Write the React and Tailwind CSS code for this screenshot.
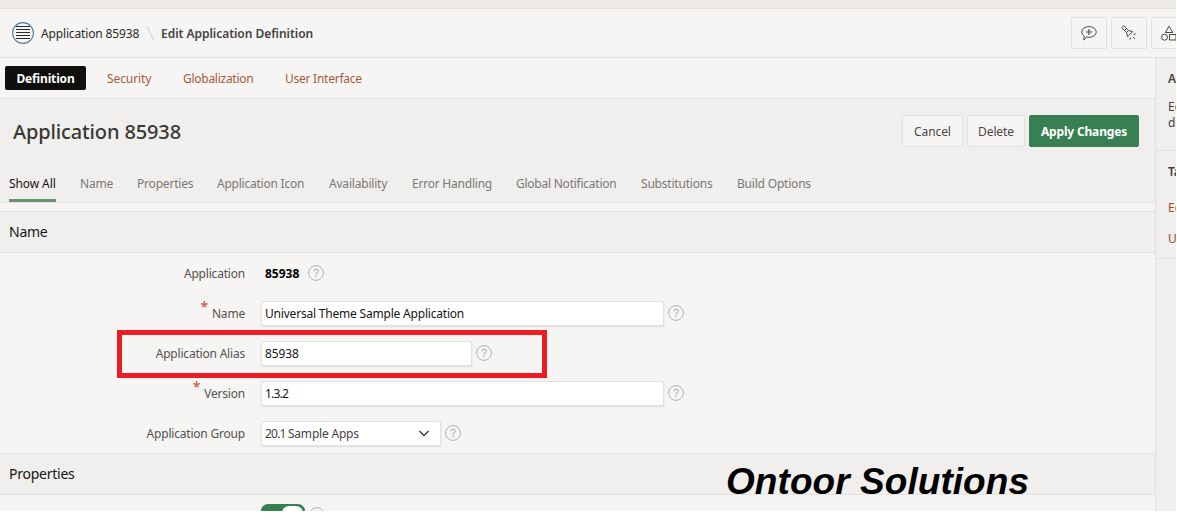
import React from "react";

const font = "font-['Noto_Sans','Open_Sans',sans-serif]";

const subTabs = [
  { label: "Name", w: "w-[33px]", track: "tracking-[-0.2px]" },
  { label: "Properties", w: "w-[56px]", track: "tracking-[-0.2px]" },
  { label: "Application Icon", w: "w-[88px]", track: "tracking-[-0.23px]" },
  { label: "Availability", w: "w-[59px]", track: "tracking-[-0.2px]" },
  { label: "Error Handling", w: "w-[80px]", track: "tracking-[-0.22px]" },
  { label: "Global Notification", w: "w-[101px]", track: "tracking-[-0.24px]" },
  { label: "Substitutions", w: "w-[72px]", track: "tracking-[-0.2px]" },
  { label: "Build Options", w: "w-[74px]", track: "tracking-[-0.2px]" },
];

function Help() {
  return (
    <svg className="block h-4 w-4 shrink-0" viewBox="0 0 16 16" fill="none" stroke="#b3b0ad">
      <circle cx="8" cy="8" r="7.4" />
      <path d="M5.9 6.3c0-1.2.9-2 2.1-2s2.100.8 2.100 1.900c0 1.500-2.100 1.500-2.100 3.200" strokeWidth="1.100" />
      <path d="M8 10.600v1.300" strokeWidth="1.200" />
    </svg>
  );
}

function Field({ label, required, children }) {
  return (
    <div className="flex h-10 items-center">
      <div className="flex w-[245px] shrink-0 justify-end pt-px tracking-[-0.2px] text-[#55524f]">
        {required && <span className="-mt-[7px] mr-[4px] text-[14px] leading-4 text-[#c74634]">*</span>}
        <span className="leading-4">{label}</span>
      </div>
      <div className="ml-4 flex items-center">{children}</div>
    </div>
  );
}

function Box({ width, children }) {
  return (
    <div
      className={`mr-1 flex h-[25px] items-center justify-between rounded-[2px] border border-[#e3e1de] bg-white pl-[3px] pt-px text-[#161513] shadow-[0_1px_2px_rgba(0,0,0,0.1)] ${width}`}
    >
      {children}
    </div>
  );
}

function Section({ title }) {
  return (
    <div className="flex h-[42px] shrink-0 items-center border-y border-[#e3e1df] bg-[#f0efed] pl-[9px] text-[14px] tracking-[-0.25px] text-[#161513]">
      {title}
    </div>
  );
}

const iconButton = "flex h-8 w-9 shrink-0 items-center justify-center rounded-[2px] border border-[#e3e1df] bg-[#f6f5f3]";
const button = "flex h-8 items-center justify-center rounded-[2px] border border-[#e3e1df] bg-[#f6f5f3] pt-[2px] tracking-[-0.1px] text-[#4a4744]";

export default function App() {
  return (
    <div className="h-[520px] w-[1177px] overflow-hidden bg-white">
      <div
        className={`relative flex h-[511px] w-[1176px] flex-col overflow-hidden bg-[#f6f5f3] text-[12px] leading-4 whitespace-nowrap ${font}`}
      >
        <div className="h-[9px] shrink-0 border-b border-[#e3e1df] bg-[#ede9e6]" />

        <header className="flex h-[49px] shrink-0 items-center border-b border-[#e3e1df] pl-[12px]">
          <svg className="h-[22px] w-[22px]" viewBox="0 0 22 22" fill="none">
            <circle cx="11" cy="11" r="10.400" stroke="#4b8391" strokeWidth="1.100" />
            <path d="M4 4.500h14M4 7.500h14M4 10.500h14M4 13.500h14M4 16.500h14" stroke="#2b2927" />
          </svg>
          <span className="ml-[7px] w-[99px] pt-[2px] tracking-[-0.15px] text-[#2b2927]">Application 85938</span>
          <svg className="ml-[6px] h-4 w-[9px]" viewBox="0 0 9 16" stroke="#cfccc8">
            <path d="M1 1l6.500 14" />
          </svg>
          <span className="ml-[6px] pt-[2px] font-semibold tracking-[-0.03px] text-[#45423f]">Edit Application Definition</span>
          <div className="ml-auto flex w-[105px] gap-1 overflow-hidden">
            <div className={iconButton}>
              <svg className="h-4 w-4" viewBox="0 0 16 16" fill="none" stroke="#4a4744">
                <path d="M3.300 11.200C1.800 10.200.8 8.700.8 7c0-3 3.200-5.400 7.200-5.400s7.200 2.400 7.200 5.400-3.200 5.300-7.200 5.300c-.8 0-1.500-.1-2.200-.3L2.700 15z" />
                <path d="M8 4v6M5 7h6" strokeWidth="1.200" />
              </svg>
            </div>
            <div className={iconButton}>
              <svg className="h-4 w-4" viewBox="0 0 16 16" fill="none" stroke="#4a4744">
                <path d="M5.500 7.600L1 3.100C.3 2.400 2.400.3 3.100 1l4.500 4.500M5.500 7.600l2.100-2.100 4.100 1.200-5 5zM4 4l1.300 1.300" />
                <path d="M12.500 9.500l2.200-.5M11.800 11.800l2.200 2.200M9.500 12.500L9 14.700" />
              </svg>
            </div>
            <div className={iconButton}>
              <svg className="h-4 w-4" viewBox="0 0 16 16" fill="none" stroke="#4a4744">
                <path d="M8 1.200l3.700 6.300H4.300zM8.500 9.500h6.500v5.500H8.500z" />
                <circle cx="3.500" cy="12.200" r="3" />
              </svg>
            </div>
          </div>
        </header>

        <div className="flex flex-1">
          <main className="flex w-[1156px] shrink-0 flex-col border-r border-[#e3e1df]">
            <nav className="flex h-[41px] shrink-0 items-center border-b border-[#e3e1df] pl-[5px] text-[#a55a3c]">
              <div className="flex h-6 w-[81px] items-center justify-center rounded-[2px] bg-[#100f0d] pt-px font-bold tracking-[-0.15px] text-white">
                Definition
              </div>
              <span className="ml-[21px] w-[76px] pt-px tracking-[-0.1px]">Security</span>
              <span className="w-[102px] pt-px tracking-[-0.27px]">Globalization</span>
              <span className="pt-px tracking-[-0.25px]">User Interface</span>
            </nav>

            <div className="flex h-[104px] shrink-0 flex-col border-b border-[#e3e1df] bg-[#f0efed]">
              <div className="flex h-[65px] items-center pl-[13px] pr-4">
                <h1 className="text-[20px] font-medium tracking-[-0.13px] text-[#3a3734]">Application 85938</h1>
                <div className="-mt-[2px] ml-auto flex gap-1">
                  <div className={`${button} w-[61px]`}>Cancel</div>
                  <div className={`${button} w-[58px]`}>Delete</div>
                  <div className="flex h-8 w-[110px] items-center justify-center rounded-[2px] bg-[#387f54] pt-[2px] font-bold tracking-[-0.17px] text-white">
                    Apply Changes
                  </div>
                </div>
              </div>
              <div className="flex h-[38px] gap-6 pl-[9px] pt-[12px] text-[#7a7774]">
                <div className="h-[26px] w-[47px] border-b-[3px] border-[#6b9466] tracking-[-0.1px] text-[#161513]">Show All</div>
                {subTabs.map((t) => (
                  <span key={t.label} className={`${t.w} ${t.track}`}>
                    {t.label}
                  </span>
                ))}
              </div>
            </div>

            <div className="h-2 shrink-0" />
            <Section title="Name" />
            <div className="h-[200px] shrink-0">
              <Field label="Application">
                <b className="ml-[4px] mr-[8px] w-[35px] pt-px text-black">85938</b>
                <Help />
              </Field>
              <Field label="Name" required>
                <Box width="w-[403px]">
                  <span className="tracking-[-0.2px]">Universal Theme Sample Application</span>
                </Box>
                <Help />
              </Field>
              <Field label="Application Alias">
                <Box width="w-[211px]">
                  <span className="tracking-[-0.1px]">85938</span>
                </Box>
                <Help />
              </Field>
              <Field label="Version" required>
                <Box width="w-[403px]">
                  <span className="tracking-[-0.8px]">1.3.2</span>
                </Box>
                <Help />
              </Field>
              <Field label="Application Group">
                <Box width="w-[180px]">
                  <span className="text-[#45423f]">
                    <span className="tracking-[-0.8px]">20.1 </span>
                    <span className="tracking-[-0.2px]">Sample Apps</span>
                  </span>
                  <svg className="mr-[10px] h-3 w-3" viewBox="0 0 12 12" fill="none" stroke="#3a3734" strokeWidth="1.300">
                    <path d="M1.500 3L6 7.500 10.500 3" />
                  </svg>
                </Box>
                <Help />
              </Field>
            </div>
            <Section title="Properties" />
            <div className="flex pl-[261px] pt-[9px]">
              <div className="flex h-6 w-11 justify-end rounded-[7px] bg-[#387f54] p-[2px]">
                <div className="h-5 w-[21px] rounded-[7px] bg-white" />
              </div>
              <div className="ml-[4px] mt-[3px]">
                <Help />
              </div>
            </div>
          </main>

          <aside className="flex w-[20px] flex-col overflow-hidden bg-[#f0efed] text-[#45423f]">
            <div className="h-[93px] shrink-0 border-b border-[#e3e1df] pl-[12px] pt-[13px]">
              <div className="font-semibold">A</div>
              <div className="mt-[12px]">Ed</div>
              <div>de</div>
            </div>
            <div className="h-[108px] shrink-0 border-b border-[#e3e1df] pl-[12px] pt-[13px]">
              <div className="font-semibold">Ta</div>
              <div className="mt-[20px] text-[#a0492c]">Ed</div>
              <div className="mt-[15px] text-[#a0492c]">U</div>
            </div>
          </aside>
        </div>

        <div className="absolute left-[117px] top-[330px] h-[48px] w-[430px] border-[5px] border-[#ed1c24]" />
        <div className="absolute left-[726px] top-[460px] font-['Liberation_Sans',Arial,sans-serif] text-[37px] font-bold italic leading-[44px] tracking-[0.06px] text-black">
          Ontoor Solutions
        </div>
      </div>
    </div>
  );
}
